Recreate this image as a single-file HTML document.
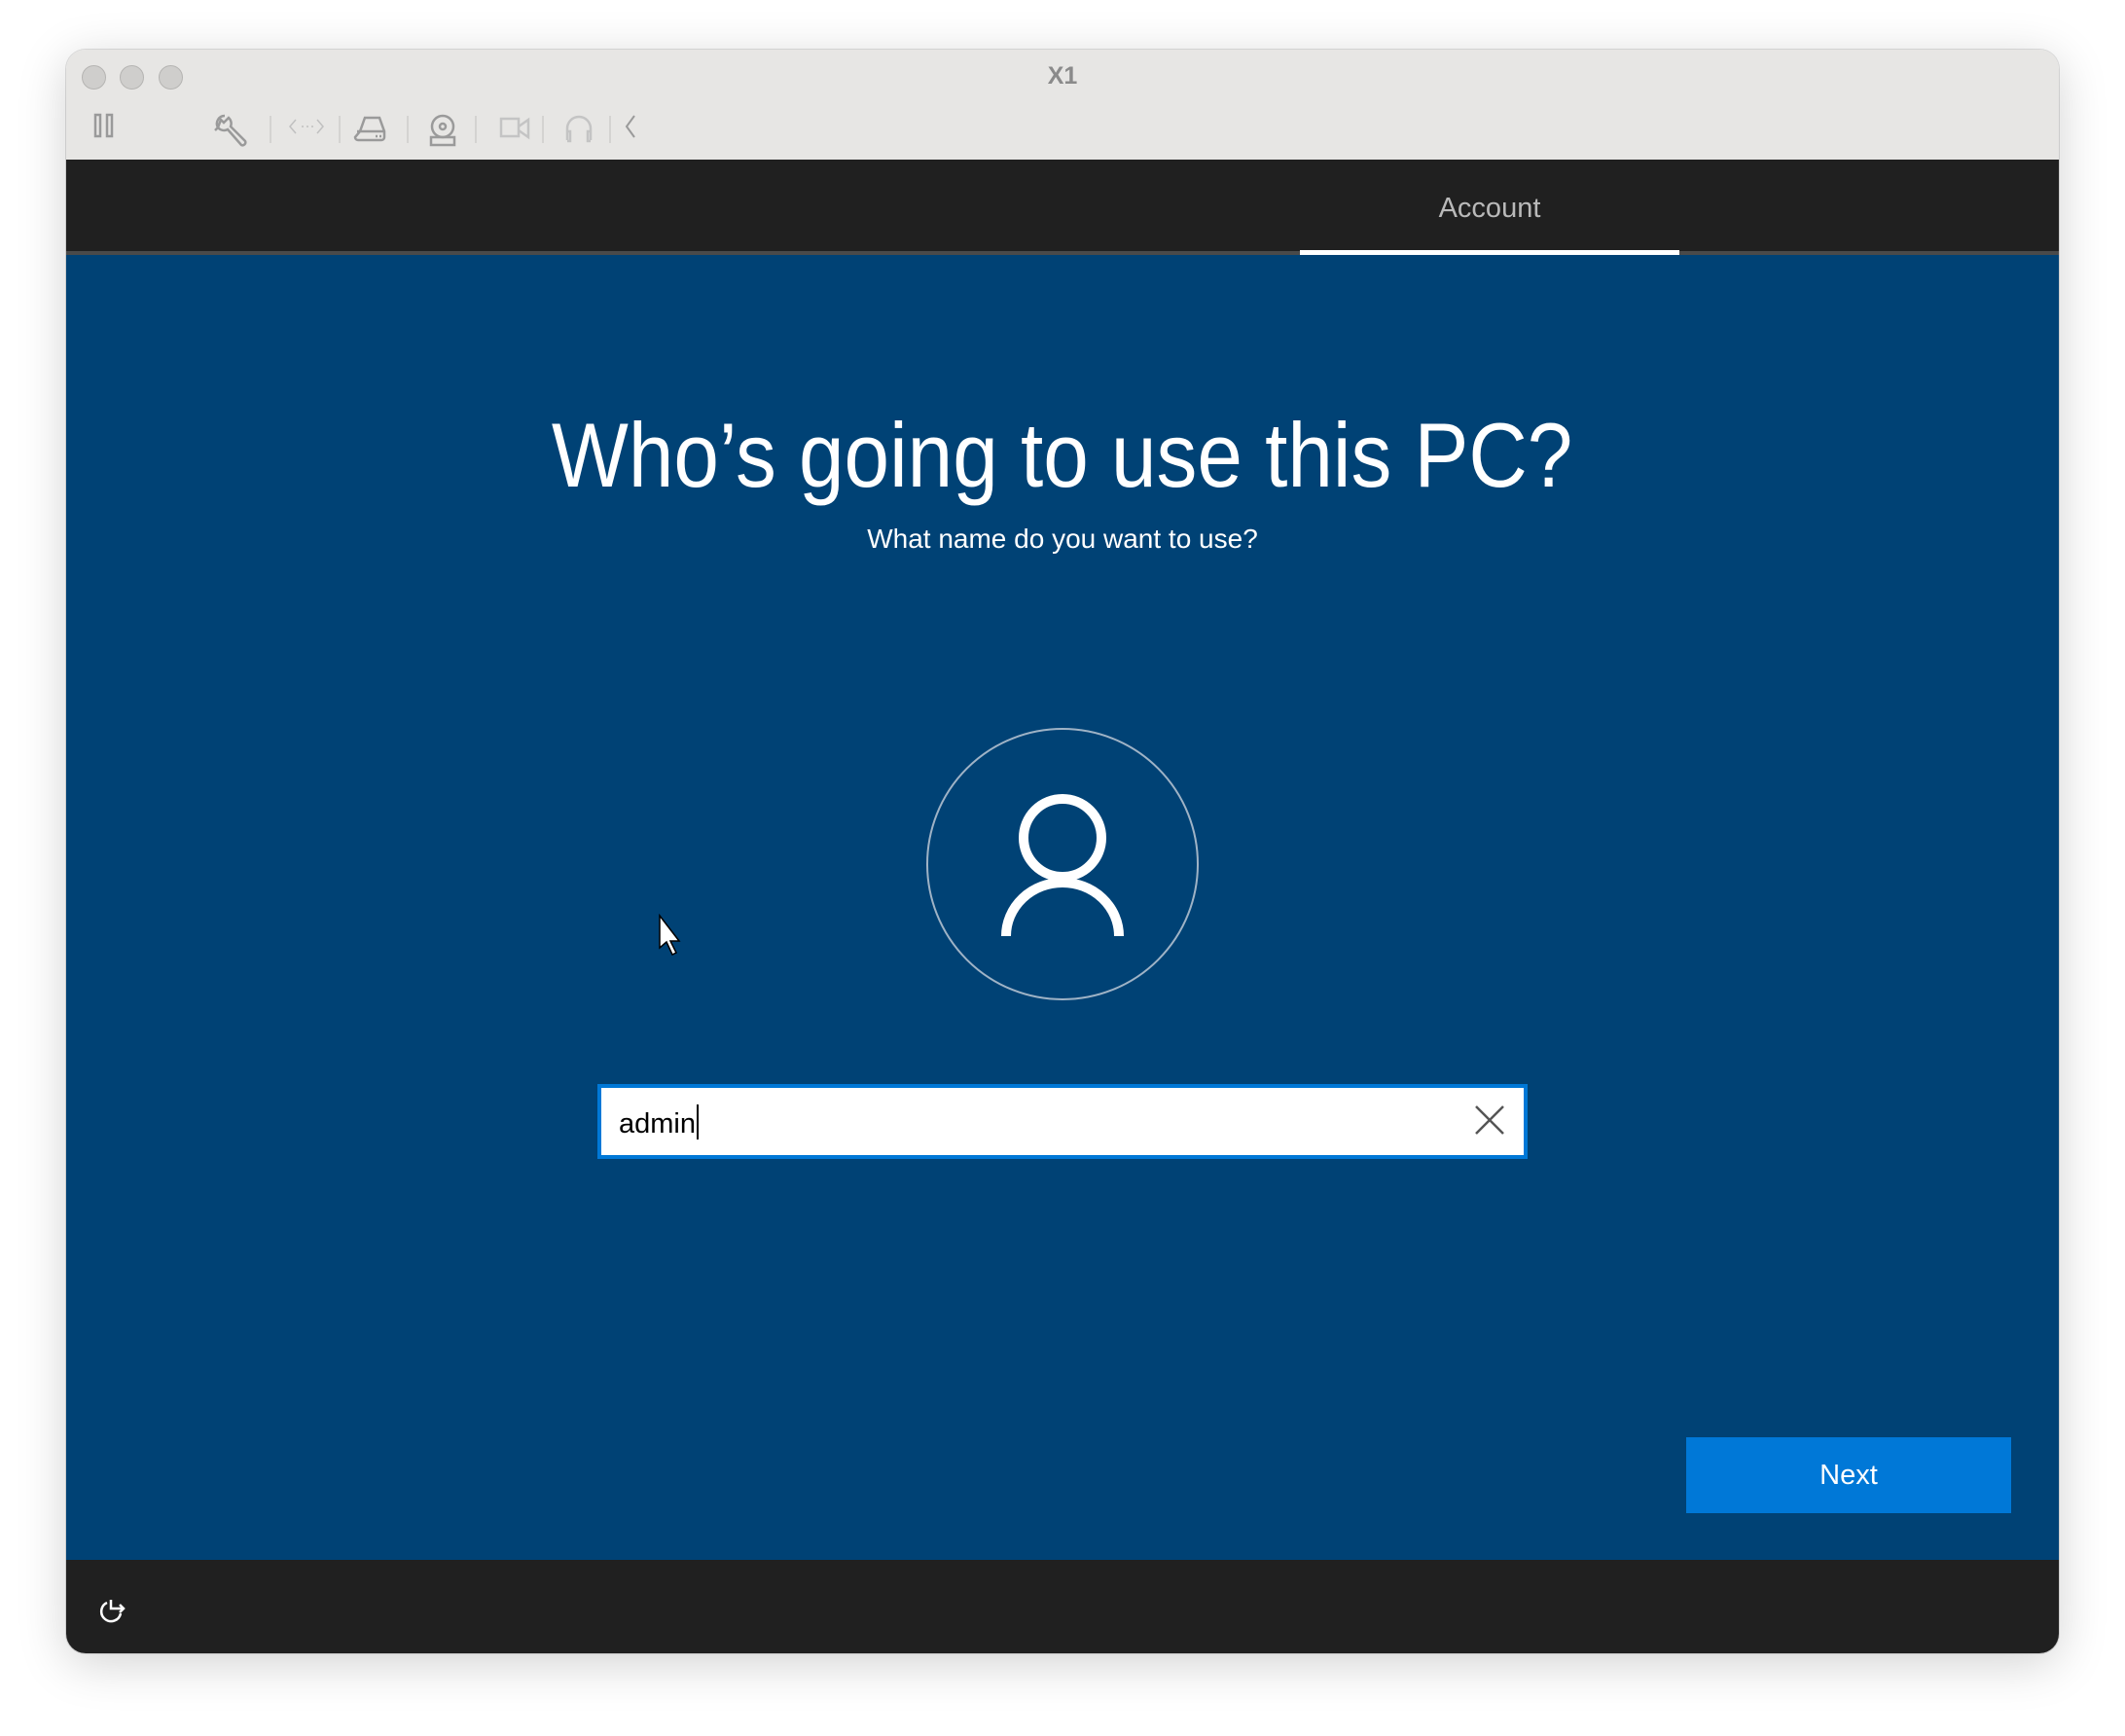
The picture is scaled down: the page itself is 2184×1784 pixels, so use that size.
<!DOCTYPE html>
<html><head><meta charset="utf-8"><style>
html,body{margin:0;padding:0;background:#fff;width:2184px;height:1784px;overflow:hidden;font-family:"Liberation Sans",sans-serif}
.win{position:absolute;left:68px;top:51px;width:2048px;height:1648px;border-radius:20px;overflow:hidden;box-shadow:0 10px 50px rgba(0,0,0,.18),0 0 0 1px rgba(0,0,0,.12)}
.tb{position:absolute;left:0;top:0;width:2048px;height:113px;background:#e7e6e4}
.tl{position:absolute;top:16px;width:23px;height:23px;border-radius:50%;background:#cfcecc;border:1px solid #b5b4b2}
.title{position:absolute;top:13px;left:0;width:100%;text-align:center;font-weight:bold;font-size:25px;color:#8a8a8a}
.sep{position:absolute;top:68px;width:2px;height:28px;background:#d4d3d1}
.hdr{position:absolute;left:0;top:113px;width:2048px;height:94px;background:#202020}
.gl{position:absolute;left:0;top:207px;width:2048px;height:4px;background:#4a4a4a}
.ul{position:absolute;left:1268px;top:206px;width:390px;height:5px;background:#fff}
.acc{position:absolute;left:1268px;width:390px;top:147px;text-align:center;color:#b9b9b9;font-size:29px}
.blue{position:absolute;left:0;top:211px;width:2048px;height:1341px;background:#004275}
.bot{position:absolute;left:0;top:1552px;width:2048px;height:96px;background:#202020}
.h1{position:absolute;left:0;width:2048px;top:362px;text-align:center;color:#fff;font-size:94px;line-height:110px}
.h1 span{display:inline-block;transform:scaleX(.89)}
.sub{position:absolute;left:0;width:2048px;top:487px;text-align:center;color:#fff;font-size:28px}
.inp{position:absolute;left:546px;top:1063px;width:948px;height:69px;border:4px solid #0078d7;background:#fff}
.inp .t{position:absolute;left:18px;top:17px;font-size:29px;color:#000}
.cur{display:inline-block;width:2px;height:36px;background:#000;vertical-align:-7px;margin-left:1px}
.next{position:absolute;left:1665px;top:1426px;width:334px;height:78px;background:#0078d7;color:#fff;font-size:29px;text-align:center;line-height:78px}
</style></head><body>
<div class="win">
<div class="tb">
<div class="tl" style="left:16px"></div><div class="tl" style="left:55px"></div><div class="tl" style="left:95px"></div>
<div class="title">X1</div>
<svg style="position:absolute;left:0;top:0" width="700" height="113" fill="none" stroke="#9a9a9a" stroke-width="2.5">
<rect x="30" y="67" width="5" height="22"/><rect x="42" y="67" width="5" height="22"/>
<path d="M163 68 a8 8 0 0 0 -7 12 l-3 3 m3 -3 a8 8 0 0 0 10 2 l14 16 a3 3 0 0 0 4 -4 l-15 -15 a8 8 0 0 0 -2 -9 l-5 5 l-3 -3 z"/>
<path d="M236 72 l-6 7 l6 7 M258 72 l6 7 l-6 7" stroke="#c0c0c0" stroke-width="1.5"/><path d="M242 79h2 M247 79h2 M252 79h2" stroke="#c0c0c0" stroke-width="1.5"/>
<path d="M302 84 l5 -14 h15 l5 14 v6 a3 3 0 0 1 -3 3 h-24 a3 3 0 0 1 -3 -3z M299 84 h28"/><path d="M318 89h2 M322 89h2"/>
<circle cx="387" cy="79" r="11"/><circle cx="387" cy="79" r="3"/><rect x="375" y="90" width="24" height="8"/>
<rect x="447" y="71" width="18" height="18" stroke="#c4c4c4"/><path d="M465 79 l10 -7 v18 l-10 -7" stroke="#c4c4c4"/>
<path d="M515 93 v-12 a12 12 0 0 1 24 0 v12" stroke="#c4c4c4"/><path d="M515 84h3v10h-3 M539 84h-3v10h3" stroke="#c4c4c4"/>
<path d="M584 68 l-8 11 l8 11" stroke-width="2"/>
</svg>
<div class="sep" style="left:209px"></div><div class="sep" style="left:280px"></div><div class="sep" style="left:350px"></div><div class="sep" style="left:420px"></div><div class="sep" style="left:489px"></div><div class="sep" style="left:558px"></div>
</div>
<div class="hdr"></div>
<div class="acc">Account</div>
<div class="blue"></div>
<div class="gl"></div><div class="ul"></div>
<div class="h1"><span>Who’s going to use this PC?</span></div>
<div class="sub">What name do you want to use?</div>
<div class="inp"><div class="t">admin<span class="cur"></span></div></div>
<div class="next">Next</div>
<div class="bot"></div>
<svg style="position:absolute;left:0;top:0" width="2048" height="1648" fill="none">
<circle cx="1024" cy="837" r="139" stroke="#9fb3c6" stroke-width="2"/>
<circle cx="1024" cy="810" r="40" stroke="#fff" stroke-width="10"/>
<path d="M966 911 a58 55 0 0 1 116 0" stroke="#fff" stroke-width="10"/>
<path d="M610 890 v33 l7 -6 l6 13 l4 -2 l-6 -12 l9 0 z" fill="#fff" stroke="#000" stroke-width="1.5"/>
<path d="M1449 1086 l28 28 M1477 1086 l-28 28" stroke="#555" stroke-width="2.5"/>
<path d="M46 1593 v9 h12 M55 1598 l4 4 l-4 4" stroke="#fff" stroke-width="2.5"/>
<path d="M42 1596 a10 10 0 1 0 14 11" stroke="#fff" stroke-width="2.5"/>
</svg>
</div>
</body></html>
